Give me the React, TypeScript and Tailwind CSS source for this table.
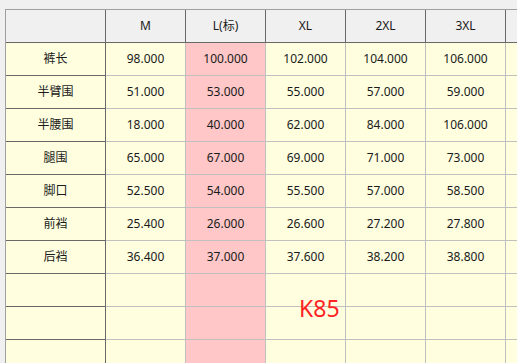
import React from "react";

const sizes = ["M", "L(标)", "XL", "2XL", "3XL"];

const rows: { name: string; values: string[] }[] = [
  { name: "裤长", values: ["98.000", "100.000", "102.000", "104.000", "106.000"] },
  { name: "半臂围", values: ["51.000", "53.000", "55.000", "57.000", "59.000"] },
  { name: "半腰围", values: ["18.000", "40.000", "62.000", "84.000", "106.000"] },
  { name: "腿围", values: ["65.000", "67.000", "69.000", "71.000", "73.000"] },
  { name: "脚口", values: ["52.500", "54.000", "55.500", "57.000", "58.500"] },
  { name: "前裆", values: ["25.400", "26.000", "26.600", "27.200", "27.800"] },
  { name: "后裆", values: ["36.400", "37.000", "37.600", "38.200", "38.800"] },
  { name: "", values: ["", "", "", "", ""] },
  { name: "", values: ["", "", "", "", ""] },
  { name: "", values: ["", "", "", "", ""] },
];

export default function App() {
  return (
    <div
      className="relative w-[517px] h-[363px] overflow-hidden bg-[#f0f0f0] text-[12px] text-[#1a1a1a]"
      style={{ fontFamily: '"Noto Sans", "Noto Sans CJK SC", sans-serif' }}
    >
      <div className="pt-[9px] pl-[5px]">
        <div className="w-[600px] border-t border-l border-[#a0a0a0]">
          {/* Header */}
          <div className="grid grid-cols-[100px_80px_80px_80px_80px_80px_80px] h-[33px] bg-[#f0f0f0]">
            <div className="border-r border-b border-[#696969]" />
            {sizes.map((s) => (
              <div
                key={s}
                className="flex items-center justify-center border-r border-b border-[#696969]"
              >
                {s}
              </div>
            ))}
            <div className="border-b border-[#696969]" />
          </div>

          {/* Body */}
          {rows.map((r, i) => (
            <div
              key={i}
              className="grid grid-cols-[100px_80px_80px_80px_80px_80px_80px] h-[33px] bg-[#ffffe0]"
            >
              <div className="flex items-center justify-center border-r border-b border-[#696969]">
                {r.name}
              </div>
              {r.values.map((v, j) => (
                <div
                  key={j}
                  className={
                    j === 1
                      ? "flex items-center justify-center bg-[#ffc7c7] border-r border-b border-[#c0c0c0]"
                      : "flex items-center justify-center border-r border-b border-[#c0c0c0]"
                  }
                >
                  {v}
                </div>
              ))}
              <div className="border-b border-[#c0c0c0]" />
            </div>
          ))}
        </div>
      </div>

      <div className="absolute left-[299px] top-[297px] text-[23px] leading-none text-[#ff2424]">
        K85
      </div>
    </div>
  );
}
